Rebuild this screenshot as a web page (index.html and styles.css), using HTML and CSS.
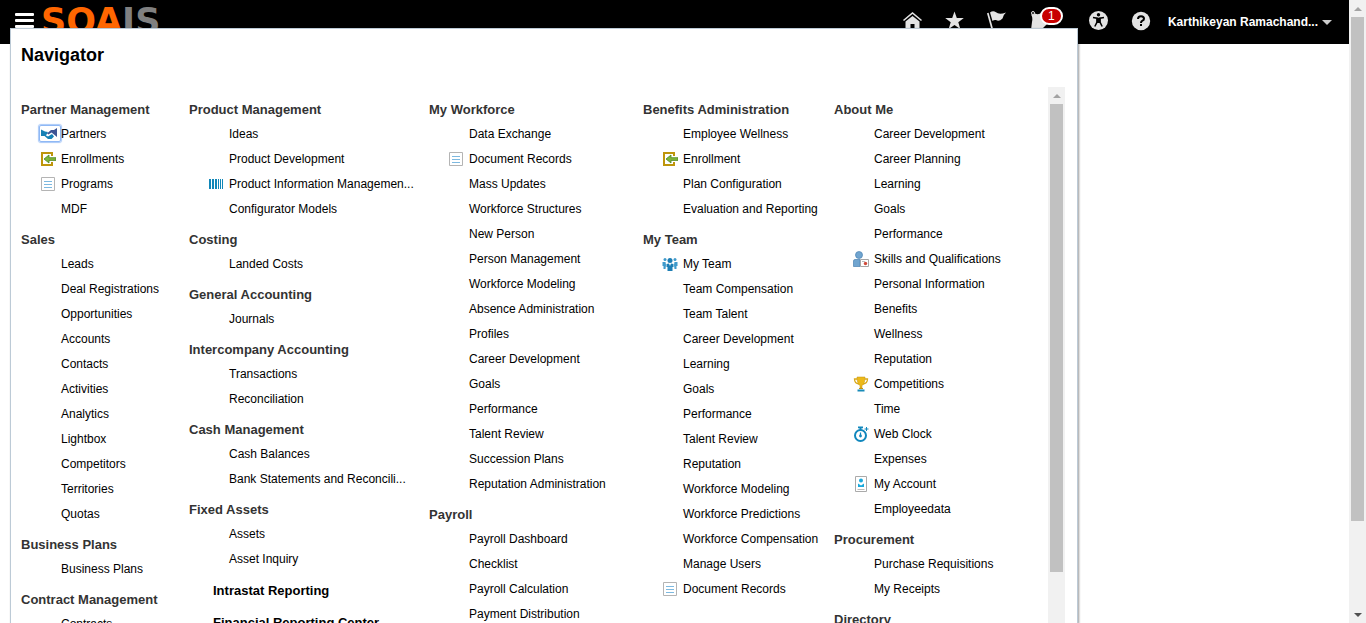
FILE: index.html
```html
<!DOCTYPE html>
<html lang="en">
<head>
<meta charset="utf-8">
<title>Navigator</title>
<link rel="stylesheet" href="styles.css">
</head>
<body>
<svg class="sprite" aria-hidden="true">
  <symbol id="doc" viewBox="0 0 16 16"><path d="M1.5 1.5h13v13h-13z" fill="#fff" stroke="#b4b4b4"/><path d="M4 5.500h8M4 8.500h8M4 11.500h8" stroke="#7db9e0" stroke-width="1"/></symbol>
  <symbol id="enroll" viewBox="0 0 16 16"><path d="M12 5V2H2v12h10v-3" fill="none" stroke="#be950b" stroke-width="2"/><path d="M4 8 9 4v2.700H16v2.700H9V12z" fill="#7db63c" stroke="#4d8420" stroke-width=".8"/></symbol>
  <symbol id="bars" viewBox="0 0 16 16"><path d="M1 3h2v10H1zM4 3h2v10H4zM7 3h2v10H7zM10 3h1v10h-1zM12 3h1v10h-1zM14 3h1v10h-1z" fill="#1187b8"/></symbol>
  <symbol id="team" viewBox="0 0 16 16"><g fill="#3f9acb"><circle cx="3" cy="3.500" r="1.500"/><circle cx="13" cy="3.500" r="1.500"/><path d="M.5 6h3l.5 3-.5 4H1.500v-3h-1zM15.500 6h-3L12 9l.5 4h2v-3h1z"/></g><g fill="#1d7eb4"><circle cx="8" cy="4.500" r="2.500"/><path d="M4.500 8 7 7.500 8 10l1-2.500L11.500 8v3h-1v4h-5v-4h-1z"/></g></symbol>
  <symbol id="skills" viewBox="0 0 16 16"><circle cx="6" cy="4" r="3.500" fill="#70a5d0" stroke="#4c82b2" stroke-width=".7"/><path d="M.5 15.500V10Q.5 8.500 2 8.500h5v7z" fill="#70a5d0" stroke="#4c82b2" stroke-width=".7"/><path d="M7.500 8.500h8v7h-8z" fill="#fff" stroke="#a5a5a5"/><path d="M9 10.500h3" stroke="#bbb"/><circle cx="12.500" cy="12.500" r="1.700" fill="#cf4b3a"/></symbol>
  <symbol id="cup" viewBox="0 0 16 16"><path d="M4.500 3H1.500q0 4.500 4.500 5M11.500 3h3q0 4.500-4.500 5" fill="none" stroke="#d9a91b" stroke-width="1.300"/><path d="M4 1h8q0 7-3 8.500V12h-2V9.500Q4 8 4 1z" fill="#edb918" stroke="#c29312" stroke-width=".5"/><path d="M6 12h4v1H6z" fill="#c29312"/><path d="M4.500 13.500h7v2h-7z" fill="#188bb8"/></symbol>
  <symbol id="clock" viewBox="0 0 16 16"><circle cx="7.500" cy="9.500" r="5.500" fill="#fff" stroke="#1187bd" stroke-width="2"/><path d="M5 .5h5v1.700H8.500V4h-2V2.200H5z" fill="#1187bd"/><path d="M13.500 1v4M11.500 3h4" stroke="#1187bd"/><path d="M6.900 6.500h1.200v3.300H6.900z" fill="#1187bd"/><circle cx="7.500" cy="10" r="1.400" fill="#1187bd"/></symbol>
  <symbol id="account" viewBox="0 0 16 16"><path d="M2.500.5h11v15h-11z" fill="#fff" stroke="#aaa"/><circle cx="8" cy="4.500" r="2" fill="#19a9dc"/><path d="M5 7.500 8 9.500l3-2V11H5z" fill="#19a9dc"/><path d="M4.500 13.500h7" stroke="#bbb"/></symbol>
</svg>

<div class="page">
  <header class="topbar">
    <button class="menu" aria-label="Navigator"><span></span><span></span><span></span></button>
    <a class="logo" href="#">SOA<span class="logo-end">IS</span></a>
    <nav class="tools" aria-label="Global">
      <button class="tool" aria-label="Home"><svg viewBox="0 0 20 20"><path d="M.5 10.500 9.500 3l9 7.500" fill="none" stroke="#e3e3e3" stroke-width="1.600"/><path d="M2.500 11.500 9.500 6l7 5.500V20h-5v-6h-4v6h-5z" fill="#e3e3e3"/></svg></button>
      <button class="tool" aria-label="Favorites"><svg viewBox="0 0 20 20"><path d="M9.500 1.500 11.800 8h7l-5.500 4.200 2 6.800-5.800-4-5.800 4 2-6.800L.2 8h7z" fill="#e3e3e3"/></svg></button>
      <button class="tool" aria-label="Watchlist"><svg viewBox="0 0 20 20"><path d="M.8 3 5.500 20" stroke="#e3e3e3" stroke-width="1.700"/><path d="M3 2.500Q6 0 9 2.200 12 5 19 2.500 16 5 15.500 8.500 12 12 9 10 7 9.500 5.500 11z" fill="#e3e3e3"/></svg></button>
      <button class="tool bell" aria-label="Notifications, 1 new"><svg viewBox="0 0 20 20"><path d="M2 4.500Q4 7 3 12L2 20H10Q15 18 18 14L13 3Q9 5 6 3.500z" fill="#e3e3e3"/><circle cx="4" cy="3" r="1.500" fill="#000" stroke="#e3e3e3"/></svg><span class="badge">1</span></button>
      <button class="tool" aria-label="Accessibility"><svg viewBox="0 0 20 20"><circle cx="9.500" cy="10.500" r="9.500" fill="#e3e3e3"/><circle cx="9.500" cy="4.700" r="1.700"/><path d="M4 7.500 8 8.200v4L5.800 16.500M15 7.500l-4 .7v4l2.200 4.300" fill="none" stroke="#000" stroke-width="1.500"/><path d="M7.500 7.700h4V13h-4z"/></svg></button>
      <button class="tool" aria-label="Help"><svg viewBox="0 0 20 20"><circle cx="10" cy="11" r="9.200" fill="#e3e3e3"/><path d="M7 9Q7 6.200 10 6.200T13 8.700Q13 10 11.500 10.700 10 11.500 10 13" fill="none" stroke="#000" stroke-width="2"/><path d="M9 14h2v2H9z"/></svg></button>
    </nav>
    <button class="user">Karthikeyan Ramachand...<span class="caret"></span></button>
  </header>

  <section class="navigator" aria-labelledby="nav-title">
    <h1 class="title" id="nav-title">Navigator</h1>
    <div class="scroller">
      <div class="columns">
        <div class="column">
          <h2>Partner Management</h2>
          <ul>
            <li><svg class="icon focused" viewBox="0 0 20 15"><path d="M1 3.500 5 5.500l3 .5-2 3.500 2 1 4-2.500 2 2.500L11.500 13H8L4.500 10 1 10z" fill="#1681b5"/><path d="M17 2v9l-3-2.500L11.500 6.500 8.500 8.500 7 7.500l4-3.500h3z" fill="#3f5594"/></svg><a href="#">Partners</a></li>
            <li><svg class="icon"><use href="#enroll"/></svg><a href="#">Enrollments</a></li>
            <li><svg class="icon"><use href="#doc"/></svg><a href="#">Programs</a></li>
            <li><a href="#">MDF</a></li>
          </ul>
          <h2>Sales</h2>
          <ul>
            <li><a href="#">Leads</a></li>
            <li><a href="#">Deal Registrations</a></li>
            <li><a href="#">Opportunities</a></li>
            <li><a href="#">Accounts</a></li>
            <li><a href="#">Contacts</a></li>
            <li><a href="#">Activities</a></li>
            <li><a href="#">Analytics</a></li>
            <li><a href="#">Lightbox</a></li>
            <li><a href="#">Competitors</a></li>
            <li><a href="#">Territories</a></li>
            <li><a href="#">Quotas</a></li>
          </ul>
          <h2>Business Plans</h2>
          <ul>
            <li><a href="#">Business Plans</a></li>
          </ul>
          <h2>Contract Management</h2>
          <ul>
            <li><a href="#">Contracts</a></li>
          </ul>
        </div>
        <div class="column">
          <h2>Product Management</h2>
          <ul>
            <li><a href="#">Ideas</a></li>
            <li><a href="#">Product Development</a></li>
            <li><svg class="icon"><use href="#bars"/></svg><a href="#">Product Information Managemen...</a></li>
            <li><a href="#">Configurator Models</a></li>
          </ul>
          <h2>Costing</h2>
          <ul>
            <li><a href="#">Landed Costs</a></li>
          </ul>
          <h2>General Accounting</h2>
          <ul>
            <li><a href="#">Journals</a></li>
          </ul>
          <h2>Intercompany Accounting</h2>
          <ul>
            <li><a href="#">Transactions</a></li>
            <li><a href="#">Reconciliation</a></li>
          </ul>
          <h2>Cash Management</h2>
          <ul>
            <li><a href="#">Cash Balances</a></li>
            <li><a href="#">Bank Statements and Reconcili...</a></li>
          </ul>
          <h2>Fixed Assets</h2>
          <ul>
            <li><a href="#">Assets</a></li>
            <li><a href="#">Asset Inquiry</a></li>
          </ul>
          <h3>Intrastat Reporting</h3>
          <h3>Financial Reporting Center</h3>
        </div>
        <div class="column">
          <h2>My Workforce</h2>
          <ul>
            <li><a href="#">Data Exchange</a></li>
            <li><svg class="icon"><use href="#doc"/></svg><a href="#">Document Records</a></li>
            <li><a href="#">Mass Updates</a></li>
            <li><a href="#">Workforce Structures</a></li>
            <li><a href="#">New Person</a></li>
            <li><a href="#">Person Management</a></li>
            <li><a href="#">Workforce Modeling</a></li>
            <li><a href="#">Absence Administration</a></li>
            <li><a href="#">Profiles</a></li>
            <li><a href="#">Career Development</a></li>
            <li><a href="#">Goals</a></li>
            <li><a href="#">Performance</a></li>
            <li><a href="#">Talent Review</a></li>
            <li><a href="#">Succession Plans</a></li>
            <li><a href="#">Reputation Administration</a></li>
          </ul>
          <h2>Payroll</h2>
          <ul>
            <li><a href="#">Payroll Dashboard</a></li>
            <li><a href="#">Checklist</a></li>
            <li><a href="#">Payroll Calculation</a></li>
            <li><a href="#">Payment Distribution</a></li>
          </ul>
        </div>
        <div class="column">
          <h2>Benefits Administration</h2>
          <ul>
            <li><a href="#">Employee Wellness</a></li>
            <li><svg class="icon"><use href="#enroll"/></svg><a href="#">Enrollment</a></li>
            <li><a href="#">Plan Configuration</a></li>
            <li><a href="#">Evaluation and Reporting</a></li>
          </ul>
          <h2>My Team</h2>
          <ul>
            <li><svg class="icon"><use href="#team"/></svg><a href="#">My Team</a></li>
            <li><a href="#">Team Compensation</a></li>
            <li><a href="#">Team Talent</a></li>
            <li><a href="#">Career Development</a></li>
            <li><a href="#">Learning</a></li>
            <li><a href="#">Goals</a></li>
            <li><a href="#">Performance</a></li>
            <li><a href="#">Talent Review</a></li>
            <li><a href="#">Reputation</a></li>
            <li><a href="#">Workforce Modeling</a></li>
            <li><a href="#">Workforce Predictions</a></li>
            <li><a href="#">Workforce Compensation</a></li>
            <li><a href="#">Manage Users</a></li>
            <li><svg class="icon"><use href="#doc"/></svg><a href="#">Document Records</a></li>
          </ul>
        </div>
        <div class="column">
          <h2>About Me</h2>
          <ul>
            <li><a href="#">Career Development</a></li>
            <li><a href="#">Career Planning</a></li>
            <li><a href="#">Learning</a></li>
            <li><a href="#">Goals</a></li>
            <li><a href="#">Performance</a></li>
            <li><svg class="icon"><use href="#skills"/></svg><a href="#">Skills and Qualifications</a></li>
            <li><a href="#">Personal Information</a></li>
            <li><a href="#">Benefits</a></li>
            <li><a href="#">Wellness</a></li>
            <li><a href="#">Reputation</a></li>
            <li><svg class="icon"><use href="#cup"/></svg><a href="#">Competitions</a></li>
            <li><a href="#">Time</a></li>
            <li><svg class="icon"><use href="#clock"/></svg><a href="#">Web Clock</a></li>
            <li><a href="#">Expenses</a></li>
            <li><svg class="icon"><use href="#account"/></svg><a href="#">My Account</a></li>
            <li><a href="#">Employeedata</a></li>
          </ul>
          <h2>Procurement</h2>
          <ul>
            <li><a href="#">Purchase Requisitions</a></li>
            <li><a href="#">My Receipts</a></li>
          </ul>
          <h2>Directory</h2>
        </div>
      </div>
      <div class="scrollbar inner" aria-hidden="true"><span class="arrow up"></span><span class="thumb"></span><span class="rest"></span></div>
    </div>
  </section>
</div>
<div class="scrollbar outer" aria-hidden="true"><span class="arrow up"></span><span class="thumb"></span><span class="rest"></span><span class="arrow down"></span></div>
</body>
</html>
```

FILE: styles.css
```css
* { box-sizing: border-box; }

body {
  display: flex;
  height: 100vh;
  margin: 0;
  overflow: hidden;
  background: #fff;
  color: #000;
  font: 12px/25px "Liberation Sans", Arial, sans-serif;
}

button {
  margin: 0;
  padding: 0;
  border: 0;
  background: none;
  color: inherit;
  font: inherit;
  cursor: pointer;
}

a { color: inherit; text-decoration: none; }

.sprite { position: absolute; width: 0; height: 0; }

.page { position: relative; flex: 1; min-width: 0; }

/* Top bar */
.topbar {
  display: flex;
  align-items: flex-start;
  height: 44px;
  padding: 0 17px 0 15px;
  background: #000;
  color: #fff;
}

.menu { display: grid; gap: 3px; width: 19px; padding-top: 13px; }
.menu span { height: 3px; border-radius: 1px; background: #fff; }

.logo {
  margin-left: 7px;
  color: #f60;
  font: bold 35px/42px "DejaVu Sans", sans-serif;
}
.logo-end { color: #808080; }

.tools { display: flex; gap: 22px; margin-left: auto; padding-top: 10px; }
.tool { position: relative; width: 20px; height: 20px; }
.tool svg { display: block; width: 20px; height: 20px; overflow: visible; }
.bell { width: 38px; }

.badge {
  position: absolute;
  top: -3px;
  left: 11px;
  width: 23px;
  height: 18px;
  border: 2px solid #fff;
  border-radius: 9px;
  background: #c80000;
  font-size: 12px;
  line-height: 14px;
}

.user {
  display: flex;
  align-items: center;
  gap: 4px;
  margin-left: 17px;
  padding-top: 10px;
  font-weight: bold;
}
.caret {
  border: 5px solid transparent;
  border-top-color: #ccc;
  border-bottom-width: 0;
}

/* Navigator panel, opened over the page */
.navigator {
  position: absolute;
  top: 28px;
  right: 271px;
  bottom: 0;
  left: 10px;
  display: flex;
  flex-direction: column;
  border: 1px solid #bccad6;
  border-bottom: 0;
  background: #fff;
  box-shadow: 1px 1px 2px rgba(0, 0, 0, .4);
}

.title {
  margin: 0;
  padding: 14px 10px 19px;
  font-size: 18px;
  line-height: 25px;
}

.scroller {
  display: flex;
  flex: 1;
  min-height: 0;
  padding: 0 12px 0 10px;
  overflow: hidden;
}

.columns {
  display: grid;
  flex: 1;
  grid-template-columns: 168px 240px 214px 191px 1fr;
  padding-top: 5px;
  white-space: nowrap;
}

.column h2 {
  margin: 0;
  padding-top: 5px;
  color: #333;
  font-size: 13px;
  line-height: 25px;
}
.column h3 {
  margin: 0;
  padding: 6px 0 1px 24px;
  font-size: 13px;
  line-height: 25px;
}
.column ul { margin: 0; padding: 0; list-style: none; }
.column li { display: flex; align-items: center; height: 25px; padding-left: 40px; }

.icon { width: 16px; height: 16px; margin: 0 5px 2px -21px; }
.icon.focused {
  width: 22px;
  height: 17px;
  margin: 0 0 2px -22px;
  border: 1px solid #8fb8f5;
  border-radius: 2px;
  box-shadow: 0 0 1px 1px #a9c9f8;
}

/* Scrollbars */
.scrollbar { display: flex; flex: none; flex-direction: column; width: 17px; background: #f1f1f1; }
.thumb { margin: 0 2px; background: #c1c1c1; }
.arrow { display: grid; flex: none; place-items: center; height: 17px; }
.arrow::before { content: ""; border: 4px solid transparent; }
.up::before { border-top-width: 0; border-bottom-color: #a3a3a3; }
.down::before { border-bottom-width: 0; border-top-color: #505050; }
.inner .thumb { flex: 468; }
.inner .rest { flex: 51; }
.outer .thumb { flex: 504; }
.outer .rest { flex: 85; }
```
